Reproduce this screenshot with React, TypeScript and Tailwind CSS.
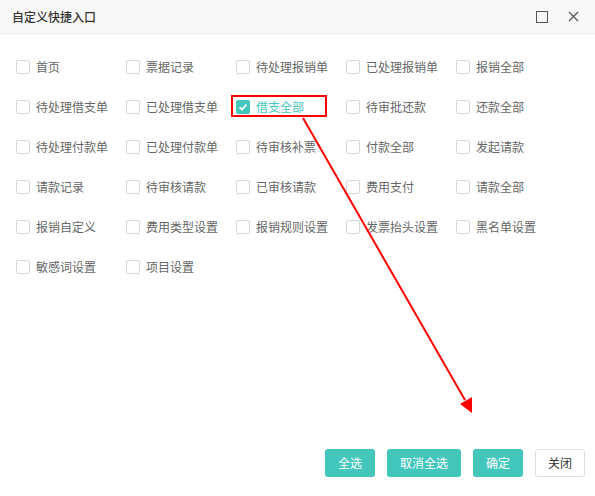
import { useState } from "react"

const items = [
  "首页", "票据记录", "待处理报销单", "已处理报销单", "报销全部",
  "待处理借支单", "已处理借支单", "借支全部", "待审批还款", "还款全部",
  "待处理付款单", "已处理付款单", "待审核补票", "付款全部", "发起请款",
  "请款记录", "待审核请款", "已审核请款", "费用支付", "请款全部",
  "报销自定义", "费用类型设置", "报销规则设置", "发票抬头设置", "黑名单设置",
  "敏感词设置", "项目设置",
]

const font = { fontFamily: '"Noto Sans CJK SC", "Noto Sans", sans-serif' }

export default function App() {
  const [checked, setChecked] = useState<string[]>(["借支全部"])

  const toggle = (name: string) =>
    setChecked((prev) => (prev.includes(name) ? prev.filter((n) => n !== name) : [...prev, name]))

  return (
    <div className="relative w-[595px] h-[496px] bg-white flex flex-col overflow-hidden" style={font}>
      {/* header */}
      <div className="h-[34px] shrink-0 bg-[#f8f8f8] border-b border-[#eeeeee] flex items-center pl-3 pr-4">
        <span className="text-[12px] font-medium text-[#333] flex-1">自定义快捷入口</span>
        <span className="w-3 h-3 border border-[#555] mr-[20px]" />
        <svg width="11" height="11" viewBox="0 0 11 11" className="text-[#555]">
          <path d="M1 1L10 10M10 1L1 10" stroke="currentColor" strokeWidth="1.3" />
        </svg>
      </div>

      {/* list */}
      <div className="flex-1 pt-[20px] pl-4">
        <div className="grid grid-cols-[110px_110px_110px_110px_110px] auto-rows-[40px]">
          {items.map((name) => {
            const on = checked.includes(name)
            return (
              <div key={name} className="h-[26px] flex items-center relative">
                {name === "借支全部" && (
                  <span className="absolute left-[-5px] top-[1px] w-[96px] h-[22px] border-2 border-[#ff0000]" />
                )}
                <button
                  onClick={() => toggle(name)}
                  className={`w-[14px] h-[14px] rounded-[2px] flex items-center justify-center ${
                    on ? "bg-[#43c6bc]" : "border border-[#d5d8de] bg-white"
                  }`}
                >
                  {on && (
                    <svg width="10" height="10" viewBox="0 0 10 10">
                      <path d="M1.5 5.2L4 7.5L8.5 2.5" fill="none" stroke="white" strokeWidth="1.8" />
                    </svg>
                  )}
                </button>
                <span className={`ml-[6px] text-[12px] whitespace-nowrap ${on ? "text-[#43c6bc]" : "text-[#666]"}`}>
                  {name}
                </span>
              </div>
            )
          })}
        </div>
      </div>

      {/* footer */}
      <div className="h-[38px] shrink-0 flex justify-end items-start gap-3 pr-[10px] mb-[9px]">
        <button className="w-[50px] h-[28px] rounded-[3px] bg-[#43c6bc] text-white text-[12px]">全选</button>
        <button className="w-[74px] h-[28px] rounded-[3px] bg-[#43c6bc] text-white text-[12px]">取消全选</button>
        <button className="w-[50px] h-[28px] rounded-[3px] bg-[#43c6bc] text-white text-[12px]">确定</button>
        <button className="w-[50px] h-[28px] rounded-[3px] bg-white border border-[#dcdfe6] text-[#333] text-[12px]">关闭</button>
      </div>

      {/* annotation arrow */}
      <svg className="absolute left-0 top-0 pointer-events-none" width="595" height="496">
        <line x1="303" y1="118" x2="465" y2="400" stroke="#ff0000" strokeWidth="2" />
        <polygon points="472,413 460,404 472,397" fill="#ff0000" />
      </svg>
    </div>
  )
}
